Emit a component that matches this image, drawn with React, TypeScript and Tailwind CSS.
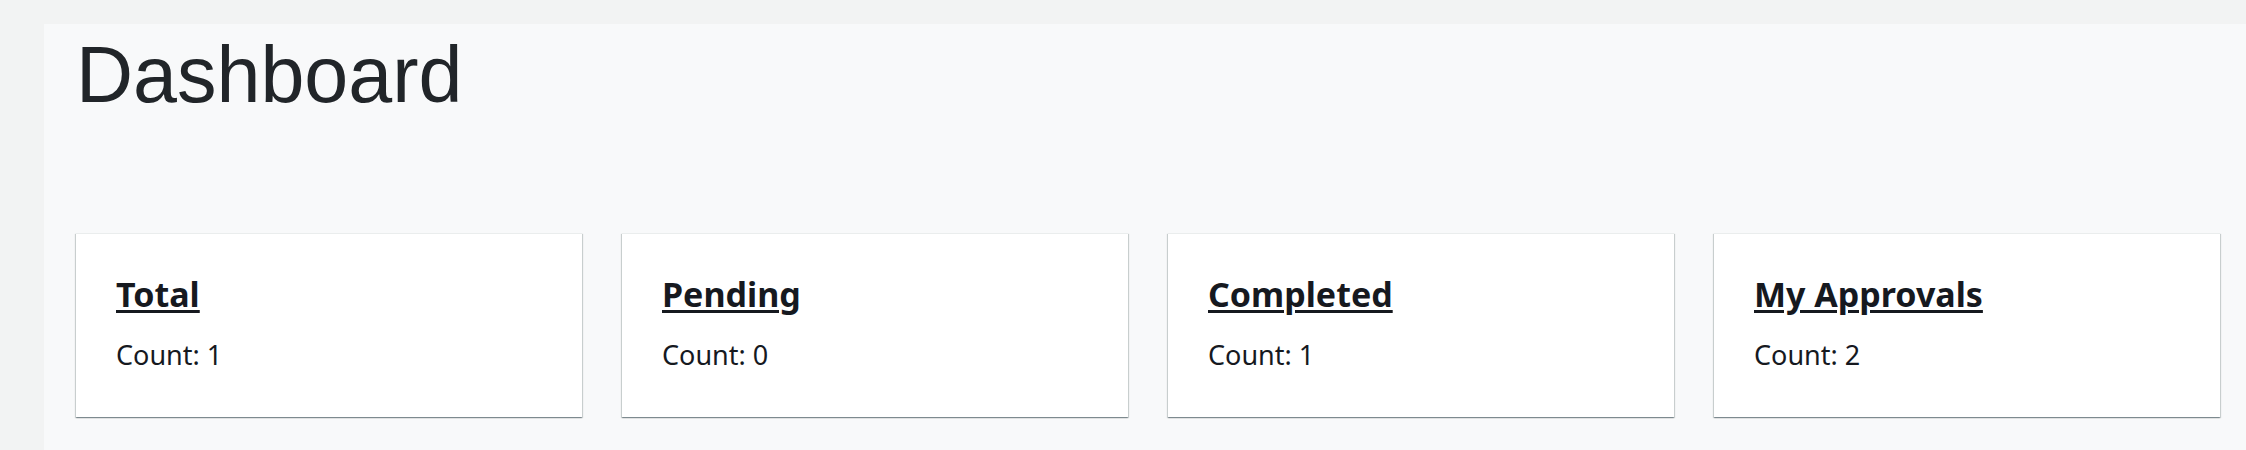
const stats = [
  { title: "Total", count: 1 },
  { title: "Pending", count: 0 },
  { title: "Completed", count: 1 },
  { title: "My Approvals", count: 2 },
];

function StatCard({ title, count }: { title: string; count: number }) {
  return (
    <div className="border-t border-[#eaeded] bg-white pt-[37px] pb-[45px] pl-[40px] pr-6 shadow-[0_1px_1px_0_rgba(0,28,36,0.3),1px_1px_1px_0_rgba(0,28,36,0.15),-1px_1px_1px_0_rgba(0,28,36,0.15)]">
      <a href="#" className="block w-fit text-[34px] font-bold leading-[46px] text-[#16191f] underline decoration-[2.5px] underline-offset-[3px]">
        {title}
      </a>
      <p className="mt-[20px] text-[27px] leading-[35px] text-[#16191f]">Count: {count}</p>
    </div>
  );
}

export default function App() {
  return (
    <div className="h-[450px] overflow-hidden bg-[#f2f3f3] pt-6 pl-11 font-['Noto_Sans',sans-serif]">
      <div className="h-full bg-[#f8f9fa] pt-[4px] pl-8 pr-[26px]">
        <h1 className="font-['Liberation_Sans',Arial,sans-serif] text-[79px] leading-[94px] font-normal text-[#212529]">
          Dashboard
        </h1>
        <div className="mt-[111px] grid grid-cols-4 gap-10">
          {stats.map((s) => (
            <StatCard key={s.title} title={s.title} count={s.count} />
          ))}
        </div>
      </div>
    </div>
  );
}
